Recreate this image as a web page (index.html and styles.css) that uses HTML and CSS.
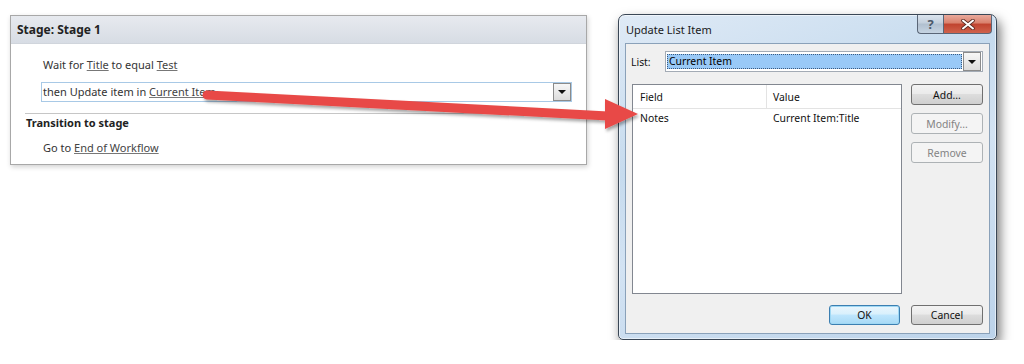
FILE: index.html
```html
<!DOCTYPE html>
<html lang="en">
<head>
  <meta charset="UTF-8" />
  <title>Update List Item</title>
  <link rel="stylesheet" href="styles.css">
</head>
<body>

<div class="page">

  <!-- Workflow stage -->
  <section class="stage">
    <div class="stage-head">Stage: Stage 1</div>
    <div class="stage-body">
      <p class="step">Wait for <a href="#">Title</a> to equal <a href="#">Test</a></p>
      <div class="step-select">
        <span>then Update item in <a href="#">Current Item</a></span>
        <span class="drop"><i class="tri"></i></span>
      </div>
    </div>
    <div class="transition">
      <h3>Transition to stage</h3>
      <p class="step">Go to <a href="#">End of Workflow</a></p>
    </div>
  </section>

  <!-- Update List Item dialog -->
  <div class="dialog">
    <div class="titlebar">
      <span class="title">Update List Item</span>
      <div class="caption-btns">
        <span class="cap-help">?</span>
        <span class="cap-close">
          <svg width="14" height="11" viewBox="0 0 14 11"><path d="M2 1.5 L12 9.5 M12 1.5 L2 9.5" stroke="#5a2a22" stroke-width="3.6" stroke-linecap="round"/><path d="M2 1.5 L12 9.5 M12 1.5 L2 9.5" stroke="#fff" stroke-width="2" stroke-linecap="round"/></svg>
        </span>
      </div>
    </div>
    <div class="client">
      <div class="list-row">
        <label>List:</label>
        <div class="combo">
          <span class="combo-sel">Current Item</span>
          <span class="drop"><i class="tri"></i></span>
        </div>
      </div>
      <div class="main">
        <div class="listview">
          <div class="lv-head"><span class="col-field">Field</span><span class="col-value">Value</span></div>
          <div class="lv-row"><span class="col-field">Notes</span><span class="col-value">Current Item:Title</span></div>
        </div>
        <div class="side-btns">
          <button class="btn">Add...</button>
          <button class="btn" disabled>Modify...</button>
          <button class="btn" disabled>Remove</button>
        </div>
      </div>
      <div class="footer">
        <button class="btn btn-default">OK</button>
        <button class="btn btn-cancel">Cancel</button>
      </div>
    </div>
  </div>

</div>

<!-- red callout arrow -->
<svg class="arrow" width="1024" height="364" viewBox="0 0 1024 364">
  <defs>
    <filter id="shadow" x="-10%" y="-50%" width="120%" height="200%">
      <feDropShadow dx="1.5" dy="2.5" stdDeviation="1.6" flood-color="#000" flood-opacity="0.35"/>
    </filter>
  </defs>
  <g filter="url(#shadow)" fill="#e84a46">
    <path d="M207 95 L608 116" stroke="#e84a46" stroke-width="9" stroke-linecap="round"/>
    <polygon points="605,99 638,114 605,129"/>
  </g>
</svg>

</body>
</html>
```

FILE: styles.css
```css
body { margin: 0; background: #fff; font-family: "Noto Sans", "Open Sans", sans-serif; color: #333; }
.page { display: flex; align-items: flex-start; gap: 31px; padding: 14px 0 0 10px; }

/* stage panel */
.stage {
  width: 577px;
  box-sizing: border-box;
  margin-top: 1px;
  border: 1px solid #a8a8a8;
  background: #fff;
  box-shadow: 1px 2px 5px rgba(0,0,0,0.18);
  font-size: 11px;
}
.stage-head {
  height: 27px;
  line-height: 28px;
  padding-left: 6px;
  background: linear-gradient(#e7eaef, #d7dce4);
  border-bottom: 1px solid #d0d5dc;
  font-weight: bold;
  font-size: 12px;
  color: #222;
}
.stage-body { padding: 12px 14px 11px 30px; }
.step { margin: 0; line-height: 18px; padding-left: 2px; }
.step a, .step-select a { color: #444; text-decoration: underline; text-decoration-color: #777; }
.step-select {
  margin-top: 8px;
  height: 18px;
  line-height: 18px;
  border: 1px solid #a8c9e6;
  display: flex;
  justify-content: space-between;
  padding-left: 1px;
}
.drop {
  width: 16px;
  height: 16px;
  border: 1px solid #8b8b8b;
  background: linear-gradient(#f7f7f7, #dcdcdc);
  display: flex;
  align-items: center;
  justify-content: center;
}
.tri { width: 0; height: 0; border-left: 4px solid transparent; border-right: 4px solid transparent; border-top: 4px solid #111; }
.transition { margin-left: 14px; border-top: 1px solid #c6c6c6; padding: 0 0 7px 1px; }
.transition h3 { margin: 0; line-height: 18px; font-size: 11px; color: #222; }
.transition .step { margin: 7px 0 0 15px; }

/* dialog window */
.dialog {
  width: 379px;
  height: 326px;
  box-sizing: border-box;
  border: 1px solid #3a4756;
  border-radius: 7px 7px 5px 5px;
  background: linear-gradient(160deg, #dfeaf6 0%, #c6dbee 35%, #d3e3f3 55%, #bcd3ea 100%);
  box-shadow: 3px 6px 12px rgba(0,0,0,0.55), inset 0 0 0 1px rgba(255,255,255,0.55);
  padding: 0 6px 5px 6px;
  display: flex;
  flex-direction: column;
  font-size: 10.4px;
  color: #111;
}
.titlebar { height: 28px; display: flex; justify-content: space-between; align-items: flex-start; }
.title { padding: 7px 0 0 1px; font-size: 11px; color: #1a1a1a; }
.caption-btns { display: flex; margin-right: -2px; }
.cap-help, .cap-close {
  height: 18px;
  border: 1px solid #5a6677;
  border-top: none;
  display: flex;
  align-items: center;
  justify-content: center;
}
.cap-help {
  width: 25px;
  border-radius: 0 0 0 4px;
  border-right: none;
  background: linear-gradient(#dbe4ee, #c3cfdc 45%, #b0bfcf 50%, #c6d4e2);
  color: #4b5869;
  font-weight: bold;
  font-size: 13px;
}
.cap-close {
  width: 47px;
  border-radius: 0 0 4px 0;
  background: linear-gradient(#e9a99b, #d9806c 45%, #c0432f 50%, #d0624c);
}
.client {
  flex: 1;
  border: 1px solid #8aa1b9;
  background: #f0f0f0;
  padding: 7px 6px 8px 6px;
  display: flex;
  flex-direction: column;
}
.list-row { display: flex; align-items: center; height: 21px; }
.list-row label { width: 34px; margin-left: -1px; }
.combo {
  flex: 1;
  height: 21px;
  box-sizing: border-box;
  border: 1px solid #a3abb5;
  background: #fff;
  display: flex;
  align-items: center;
  padding: 1px;
}
.combo-sel {
  flex: 1;
  height: 15px;
  line-height: 15px;
  background: #99c9f7;
  outline: 1px dotted #3a5a80;
  outline-offset: -1px;
  padding-left: 2px;
  color: #000;
}
.combo .drop { width: 16px; height: 17px; margin-left: 1px; }
.main { display: flex; gap: 9px; margin-top: 12px; }
.listview { width: 270px; height: 210px; box-sizing: border-box; border: 1px solid #828790; background: #fff; }
.lv-head, .lv-row { display: flex; }
.lv-head { height: 23px; line-height: 24px; border-bottom: 1px solid #e3e3e3; }
.lv-row { height: 19px; line-height: 19px; }
.col-field { width: 126px; padding-left: 7px; }
.lv-head .col-field { border-right: 1px solid #e3e3e3; }
.col-value { padding-left: 6px; }
.lv-head .col-value { padding-left: 6px; }
.lv-row .col-value { padding-left: 7px; }
.side-btns { display: flex; flex-direction: column; gap: 8px; width: 72px; }
.btn {
  height: 21px;
  box-sizing: border-box;
  border: 1px solid #707070;
  border-radius: 3px;
  background: linear-gradient(#f3f3f3, #ebebeb 45%, #dddddd 50%, #cfcfcf);
  font-family: inherit;
  font-size: 10.4px;
  color: #111;
  padding: 0;
}
.btn:disabled { border-color: #adb2b5; background: #f4f4f4; color: #838383; }
.footer { display: flex; justify-content: flex-end; gap: 11px; margin-top: 11px; }
.btn-default {
  width: 71px;
  height: 20px;
  border-color: #3c7fb1;
  background: linear-gradient(#eaf6fd, #d9f0fc 45%, #bee6fd 50%, #a7d9f5);
  box-shadow: inset 0 0 0 1px #9fd8f4;
}
.btn-cancel { width: 72px; height: 20px; }

.arrow { position: absolute; top: 0; left: 0; pointer-events: none; }
```
